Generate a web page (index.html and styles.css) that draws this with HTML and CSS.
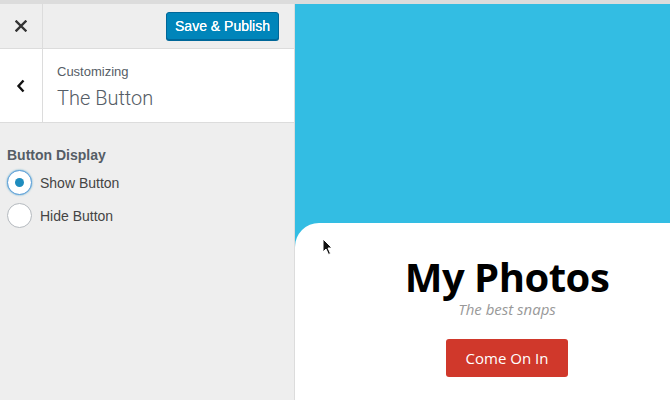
FILE: index.html
```html
<!DOCTYPE html>
<html>
<head>
<meta charset="utf-8">
<link rel="stylesheet" href="styles.css">
</head>
<body>
<div class="app">
  <aside class="sidebar">
    <div class="header">
      <div class="close">
        <svg width="12" height="12" viewBox="0 0 12 12"><path d="M1.5 1.5 L10.5 10.5 M10.5 1.5 L1.5 10.5" stroke="#333" stroke-width="2.4" stroke-linecap="square"/></svg>
      </div>
      <div class="header-actions">
        <button class="btn-primary">Save &amp; Publish</button>
      </div>
    </div>
    <div class="section-title">
      <div class="back">
        <svg width="10" height="14" viewBox="0 0 10 14"><path d="M7.5 1.5 L2.5 7 L7.5 12.5" fill="none" stroke="#111" stroke-width="2.4"/></svg>
      </div>
      <div class="title-info">
        <div class="title-small">Customizing</div>
        <div class="title-big">The Button</div>
      </div>
    </div>
    <div class="controls">
      <div class="control-label">Button Display</div>
      <label class="radio-row"><span class="radio checked"></span><span class="radio-text">Show Button</span></label>
      <label class="radio-row"><span class="radio"></span><span class="radio-text">Hide Button</span></label>
    </div>
  </aside>
  <main class="preview">
    <section class="card">
      <h1 class="site-title">My Photos</h1>
      <p class="tagline">The best snaps</p>
      <a class="cta">Come On In</a>
    </section>
    <svg class="cursor" width="12" height="18" viewBox="0 0 12 18"><path d="M1 1 L1 14 L4 11 L6.5 16.5 L8.5 15.5 L6 10 L10 10 Z" fill="#111" stroke="#fff" stroke-width="1"/></svg>
  </main>
</div>
</body>
</html>
```
FILE: styles.css
```css
* { box-sizing: border-box; }
html, body { margin: 0; padding: 0; }
body {
  width: 670px;
  height: 400px;
  overflow: hidden;
  background: #dcdcdc;
  padding-top: 4px;
  font-family: "Liberation Sans", Arial, sans-serif;
}
.app {
  display: flex;
  height: 396px;
}
.sidebar {
  width: 295px;
  flex: none;
  background: #eeeeee;
  border-right: 1px solid #dcdcdc;
  display: flex;
  flex-direction: column;
}
.header {
  height: 45px;
  display: flex;
  border-bottom: 1px solid #dcdcdc;
}
.close {
  width: 43px;
  border-right: 1px solid #dcdcdc;
  display: flex;
  align-items: center;
  justify-content: center;
}
.header-actions {
  flex: 1;
  display: flex;
  align-items: center;
  justify-content: flex-end;
  padding-right: 15px;
}
.btn-primary {
  font-family: "Liberation Sans", Arial, sans-serif;
  font-size: 14px;
  color: #fff;
  background: #0085ba;
  border: 1px solid #006799;
  border-radius: 3px;
  box-shadow: 0 1px 0 #006799;
  height: 28px;
  width: 113px;
  padding: 0;
  white-space: nowrap;
  text-shadow: 0 0 0.4px #fff;
}
.section-title {
  height: 74px;
  display: flex;
  background: #fff;
  border-bottom: 1px solid #dcdcdc;
}
.back {
  width: 43px;
  border-right: 1px solid #dcdcdc;
  display: flex;
  align-items: center;
  justify-content: center;
}
.title-info {
  padding: 15px 0 0 14px;
  color: #555d66;
}
.title-small {
  font-size: 13px;
  line-height: 16px;
}
.title-big {
  font-family: Roboto, sans-serif;
  font-weight: 300;
  font-size: 20px;
  line-height: 24px;
  margin-top: 6px;
  color: #555d66;
}
.controls {
  padding: 23px 7px 0;
}
.control-label {
  font-size: 14px;
  font-weight: bold;
  color: #555d66;
  line-height: 18px;
}
.radio-row {
  display: flex;
  align-items: center;
  gap: 8px;
  height: 25px;
  margin-top: 8px;
}
.radio-row:first-of-type { margin-top: 6px; }
.radio {
  width: 25px;
  height: 25px;
  border-radius: 50%;
  background: #fff;
  border: 1px solid #b4b9be;
  display: flex;
  align-items: center;
  justify-content: center;
}
.radio.checked {
  border-color: #5b9dd9;
  box-shadow: 0 0 2px rgba(30,140,190,.8);
}
.radio.checked::after {
  content: "";
  width: 9px;
  height: 9px;
  border-radius: 50%;
  background: #1e8cbe;
}
.radio-text {
  font-size: 14px;
  color: #444;
}
.preview {
  flex: 1;
  background: #33bde3;
  position: relative;
  overflow: hidden;
  padding-top: 219px;
}
.card {
  width: 424px;
  height: 200px;
  background: #fff;
  border-top-left-radius: 24px;
  text-align: center;
  padding-top: 34px;
}
.site-title {
  margin: 0;
  font-family: "Open Sans", sans-serif;
  font-weight: 700;
  font-size: 40px;
  line-height: 40px;
  color: #000;
  letter-spacing: -0.5px;
}
.tagline {
  margin: 3px 0 0;
  font-family: "Open Sans", sans-serif;
  font-style: italic;
  font-size: 15px;
  line-height: 18px;
  color: #999;
}
.cta {
  display: inline-block;
  margin-top: 21px;
  width: 122px;
  height: 38px;
  line-height: 38px;
  background: #d0382b;
  color: #fff;
  border-radius: 3px;
  font-family: "Open Sans", sans-serif;
  font-size: 15px;
}
.cursor {
  position: absolute;
  left: 27px;
  top: 234px;
}
```
